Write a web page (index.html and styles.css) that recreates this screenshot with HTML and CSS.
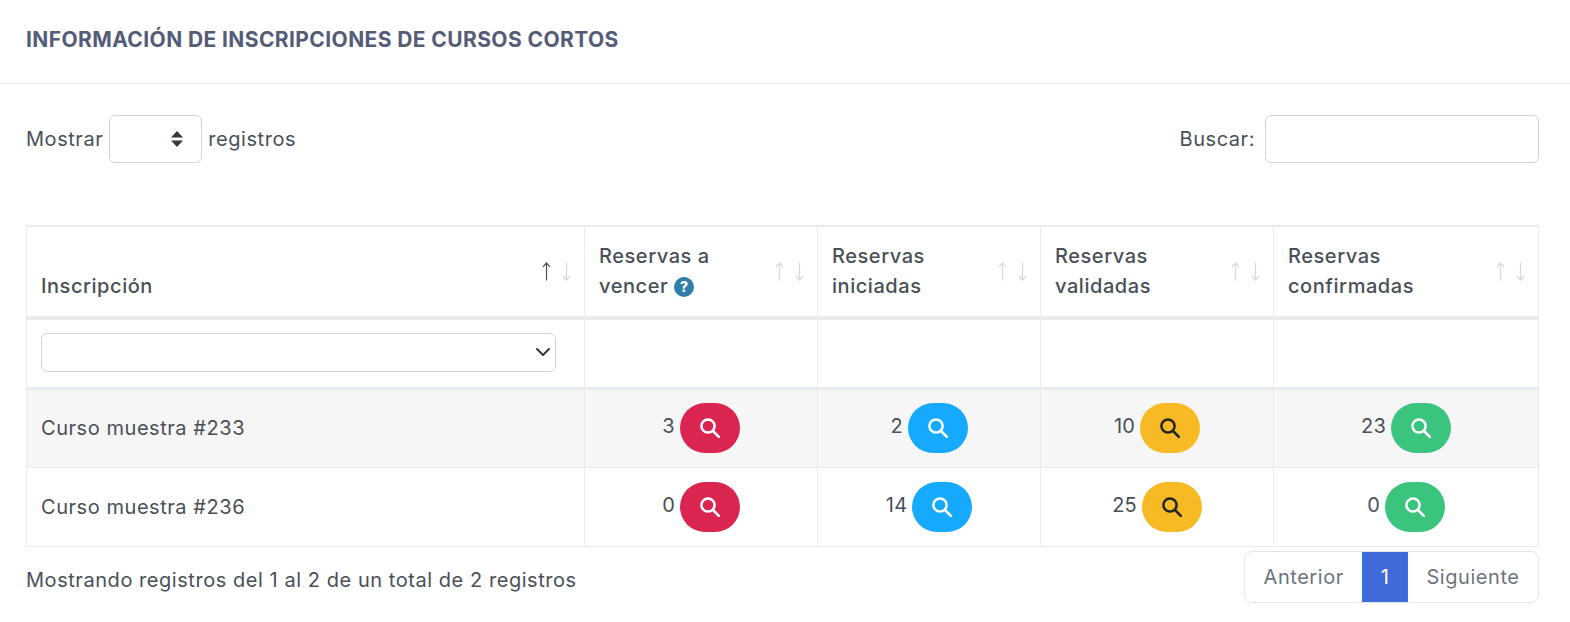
FILE: index.html
```html
<!DOCTYPE html>
<html lang="es">
<head>
  <meta charset="UTF-8" />
  <meta name="viewport" content="width=device-width, initial-scale=1.0"/>
  <title>Inscripciones de cursos cortos</title>
  <link rel="stylesheet" href="styles.css">
</head>
<body>

  <svg class="icon-defs" width="0" height="0" aria-hidden="true">
    <symbol id="lupa" viewBox="0 0 20 20">
      <circle cx="8" cy="8" r="6.6" fill="none" stroke="currentColor" stroke-width="2.5"/>
      <line x1="13" y1="13" x2="18.8" y2="18.8" stroke="currentColor" stroke-width="2.6" stroke-linecap="round"/>
    </symbol>
  </svg>

  <div class="card-header">Información de inscripciones de cursos cortos</div>

  <div class="card-body">
    <div class="controls">
      <label class="control">Mostrar <select class="select-length"></select> registros</label>
      <label class="control">Buscar: <input type="search" class="input-search"></label>
    </div>

    <table class="tabla">
      <colgroup>
        <col class="col-a"><col class="col-b"><col class="col-c"><col class="col-b"><col class="col-d">
      </colgroup>
      <thead>
        <tr class="fila-titulos">
          <th class="sort-activo">Inscripción</th>
          <th>Reservas a<br>vencer <span class="ayuda">?</span></th>
          <th>Reservas<br>iniciadas</th>
          <th>Reservas<br>validadas</th>
          <th>Reservas<br>confirmadas</th>
        </tr>
        <tr class="fila-filtro">
          <td><select class="select-filtro"></select></td>
          <td></td><td></td><td></td><td></td>
        </tr>
      </thead>
      <tbody>
        <tr class="impar">
          <td>Curso muestra #233</td>
          <td class="num">3 <a class="btn-lupa rojo"><svg><use href="#lupa"/></svg></a></td>
          <td class="num">2 <a class="btn-lupa azul"><svg><use href="#lupa"/></svg></a></td>
          <td class="num">10 <a class="btn-lupa amarillo"><svg><use href="#lupa"/></svg></a></td>
          <td class="num">23 <a class="btn-lupa verde"><svg><use href="#lupa"/></svg></a></td>
        </tr>
        <tr>
          <td>Curso muestra #236</td>
          <td class="num">0 <a class="btn-lupa rojo"><svg><use href="#lupa"/></svg></a></td>
          <td class="num">14 <a class="btn-lupa azul"><svg><use href="#lupa"/></svg></a></td>
          <td class="num">25 <a class="btn-lupa amarillo"><svg><use href="#lupa"/></svg></a></td>
          <td class="num">0 <a class="btn-lupa verde"><svg><use href="#lupa"/></svg></a></td>
        </tr>
      </tbody>
    </table>

    <div class="pie">
      <div class="info">Mostrando registros del 1 al 2 de un total de 2 registros</div>
      <div class="paginacion">
        <a class="pag">Anterior</a>
        <a class="pag activa">1</a>
        <a class="pag">Siguiente</a>
      </div>
    </div>
  </div>

</body>
</html>
```

FILE: styles.css
```css
* {
  box-sizing: border-box;
}

body {
  margin: 0;
  font-family: 'Inter', 'Open Sans', sans-serif;
  font-size: 20px;
  letter-spacing: 0.55px;
  color: #495057;
  background: #fff;
}

.icon-defs {
  position: absolute;
}

.card-header {
  height: 84px;
  padding-left: 26px;
  display: flex;
  align-items: center;
  padding-bottom: 4px;
  border-bottom: 1px solid #e4e6ea;
  font-size: 21px;
  font-weight: 700;
  letter-spacing: 0.4px;
  text-transform: uppercase;
  color: #545c78;
}

.card-body {
  padding: 31px 32px 0 26px;
}

.controls {
  display: flex;
  justify-content: space-between;
  align-items: center;
  height: 48px;
  margin-bottom: 62px;
}

.control {
  display: flex;
  align-items: center;
  gap: 6px;
}

.select-length {
  appearance: none;
  width: 93px;
  height: 48px;
  border: 1px solid #ced4da;
  border-radius: 6px;
  background: #fff url("data:image/svg+xml,%3Csvg xmlns='http://www.w3.org/2000/svg' viewBox='0 0 14 18'%3E%3Cpath d='M7 1l6 6.500H1zM7 17l-6-6.500h12z' fill='%23343a40'/%3E%3C/svg%3E") no-repeat right 17px center / 14px 18px;
}

.input-search {
  width: 274px;
  height: 48px;
  margin-left: 4px;
  margin-right: -1px;
  border: 1px solid #ced4da;
  border-radius: 6px;
}

.tabla {
  width: 1512px;
  table-layout: fixed;
  border-collapse: collapse;
}

.col-a { width: 558px; }
.col-b { width: 233px; }
.col-c { width: 223px; }
.col-d { width: 265px; }

.tabla th,
.tabla td {
  border: 1px solid #e9ecef;
  padding: 0 14px;
}

.tabla th {
  position: relative;
  height: 92px;
  padding-bottom: 15px;
  border-top-width: 2px;
  border-bottom-width: 4px;
  vertical-align: bottom;
  text-align: left;
  font-weight: 500;
  line-height: 30px;
}

/* flechas de orden */
.tabla th::before,
.tabla th::after {
  content: "";
  position: absolute;
  top: 35px;
  width: 9px;
  height: 19px;
  background: no-repeat center / 9px 19px;
}

.tabla th::before {
  right: 33px;
  background-image: url("data:image/svg+xml,%3Csvg xmlns='http://www.w3.org/2000/svg' viewBox='0 0 9 19'%3E%3Cpath d='M4.500 18.500V1M1 4.800L4.500 1 8 4.800' fill='none' stroke='%23d5d8dc' stroke-width='1.200'/%3E%3C/svg%3E");
}

.tabla th::after {
  right: 13px;
  background-image: url("data:image/svg+xml,%3Csvg xmlns='http://www.w3.org/2000/svg' viewBox='0 0 9 19'%3E%3Cpath d='M4.500 .5V18M1 14.200L4.500 18 8 14.200' fill='none' stroke='%23d5d8dc' stroke-width='1.200'/%3E%3C/svg%3E");
}

.tabla th.sort-activo::before {
  background-image: url("data:image/svg+xml,%3Csvg xmlns='http://www.w3.org/2000/svg' viewBox='0 0 9 19'%3E%3Cpath d='M4.500 18.500V1M1 4.800L4.500 1 8 4.800' fill='none' stroke='%23495057' stroke-width='1.200'/%3E%3C/svg%3E");
}

.ayuda {
  display: inline-block;
  width: 20px;
  height: 20px;
  border-radius: 50%;
  background: #2f7fa9;
  color: #fff;
  font-size: 14px;
  font-weight: 800;
  line-height: 20px;
  letter-spacing: 0;
  text-align: center;
  vertical-align: 1px;
}

.fila-filtro td {
  height: 70px;
  padding-bottom: 2px;
  border-bottom-width: 3px;
}

.select-filtro {
  appearance: none;
  display: block;
  width: 515px;
  height: 39px;
  border: 1px solid #ced4da;
  border-radius: 6px;
  background: #fff url("data:image/svg+xml,%3Csvg xmlns='http://www.w3.org/2000/svg' viewBox='0 0 16 16'%3E%3Cpath d='M2 5l6 6 6-6' fill='none' stroke='%23343a40' stroke-width='2' stroke-linecap='round' stroke-linejoin='round'/%3E%3C/svg%3E") no-repeat right 4px center / 16px 16px;
}

.tabla tbody td {
  height: 79px;
}

.tabla tr.impar td {
  background: #f6f6f6;
}

.tabla td.num {
  text-align: center;
  letter-spacing: 0.2px;
  word-spacing: -1px;
}

.btn-lupa {
  display: inline-flex;
  justify-content: center;
  align-items: center;
  vertical-align: middle;
  width: 60px;
  height: 50px;
  border-radius: 25px;
  color: #fff;
}

.btn-lupa svg {
  width: 20px;
  height: 20px;
}

.rojo { background: #d92550; }
.azul { background: #16aaff; }
.verde { background: #3ac47d; }
.amarillo { background: #f7b924; color: #212529; }

.pie {
  display: flex;
  justify-content: space-between;
  align-items: flex-start;
  margin-top: 4px;
}

.info {
  padding-top: 17px;
}

.paginacion {
  display: flex;
  height: 52px;
  margin-right: -1px;
  border: 1px solid #e4e6ea;
  border-radius: 8px;
  overflow: hidden;
}

.pag {
  display: flex;
  align-items: center;
  padding: 0 18.5px;
  color: #6c757d;
}

.pag.activa {
  background: #3f6ad8;
  border: solid #1c7cf0;
  border-width: 0 1px;
  color: #fff;
  padding: 0 17.5px;
}
```
